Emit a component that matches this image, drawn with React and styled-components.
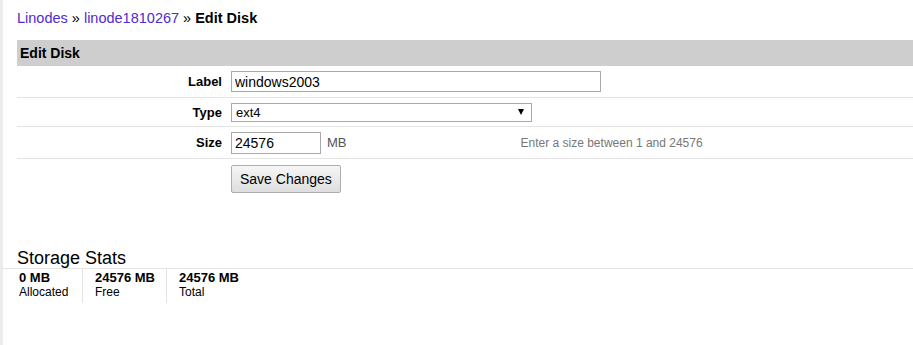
import React from 'react';
import styled, { createGlobalStyle } from 'styled-components';

const GlobalStyle = createGlobalStyle`
  html, body {
    margin: 0;
    padding: 0;
    background: #fff;
    font-family: Arial, "Liberation Sans", sans-serif;
    font-size: 13px;
    color: #000;
  }
`;

const Page = styled.div`
  min-height: 345px;
  border-left: 3px solid #ebebeb;
  padding: 8px 0 0 14px;
  box-sizing: border-box;
`;

const Crumbs = styled.div`
  font-size: 14.5px;
  line-height: 20px;
  height: 32px;
  a {
    color: #4f2bd0;
    text-decoration: none;
  }
  b {
    font-weight: bold;
  }
`;

const Header = styled.div`
  background: #cecece;
  height: 26px;
  line-height: 26px;
  padding-left: 3px;
  font-weight: bold;
  font-size: 14px;
`;

const Row = styled.div`
  display: grid;
  grid-template-columns: 205px 1fr;
  column-gap: 9px;
  align-items: center;
  height: ${p => p.h}px;
  border-bottom: ${p => (p.last ? 'none' : '1px solid #e4e4e4')};
  box-sizing: border-box;
`;

const Label = styled.div`
  text-align: right;
  font-weight: bold;
`;

const Field = styled.div`
  display: flex;
  align-items: center;
`;

const TextInput = styled.input`
  width: ${p => p.w}px;
  height: ${p => p.hh || 22}px;
  box-sizing: border-box;
  border: 1px solid #a9a9a9;
  padding: 0 3px;
  font-family: Arial, "Liberation Sans", sans-serif;
  font-size: 14px;
  color: #000;
  margin: 0;
`;

const SelectBox = styled.div`
  width: 301px;
  height: 19px;
  box-sizing: border-box;
  border: 1px solid #a9a9a9;
  display: flex;
  align-items: center;
  justify-content: space-between;
  padding: 0 7px 0 4px;
  font-size: 13px;
`;

const Arrow = styled.span`
  width: 0;
  height: 0;
  border-left: 3.5px solid transparent;
  border-right: 3.5px solid transparent;
  border-top: 6px solid #000;
`;

const Unit = styled.span`
  margin-left: 6px;
  color: #555;
`;

const Hint = styled.span`
  margin-left: 174px;
  color: #777;
  font-size: 12px;
`;

const Button = styled.button`
  height: 28px;
  padding: 0 8px;
  font-family: Arial, "Liberation Sans", sans-serif;
  font-size: 14px;
  color: #000;
  border: 1px solid #adadad;
  border-radius: 2px;
  background: linear-gradient(#f6f6f6, #dedede);
  margin: 0;
`;

const StatsTitle = styled.div`
  margin-top: 49px;
  font-size: 18px;
  line-height: 20px;
`;

const StatsRow = styled.div`
  display: flex;
  border-top: 1px solid #e4e4e4;
  margin-left: -14px;
  padding-left: 14px;
`;

const Stat = styled.div`
  width: ${p => p.w}px;
  padding: 1px 0 3px 2px;
  border-left: ${p => (p.first ? 'none' : '1px solid #e4e4e4')};
  box-sizing: border-box;
  padding-left: ${p => (p.first ? 2 : 12)}px;
  line-height: 15px;
  font-size: 12px;
  b {
    display: block;
    font-size: 13px;
  }
`;

export default function App() {
  return (
    <>
      <GlobalStyle />
      <Page>
        <Crumbs>
          <a href="#">Linodes</a> » <a href="#">linode1810267</a> » <b>Edit Disk</b>
        </Crumbs>
        <Header>Edit Disk</Header>
        <Row h={32}>
          <Label>Label</Label>
          <Field>
            <TextInput w={370} hh={21} defaultValue="windows2003" />
          </Field>
        </Row>
        <Row h={29}>
          <Label>Type</Label>
          <Field>
            <SelectBox>
              <span>ext4</span>
              <Arrow />
            </SelectBox>
          </Field>
        </Row>
        <Row h={32}>
          <Label>Size</Label>
          <Field>
            <TextInput w={90} defaultValue="24576" />
            <Unit>MB</Unit>
            <Hint>Enter a size between 1 and 24576</Hint>
          </Field>
        </Row>
        <Row h={40} last>
          <span />
          <Field>
            <Button>Save Changes</Button>
          </Field>
        </Row>
        <StatsTitle>Storage Stats</StatsTitle>
        <StatsRow>
          <Stat w={65} first>
            <b>0 MB</b>
            Allocated
          </Stat>
          <Stat w={84}>
            <b>24576 MB</b>
            Free
          </Stat>
          <Stat w={84}>
            <b>24576 MB</b>
            Total
          </Stat>
        </StatsRow>
      </Page>
    </>
  );
}
